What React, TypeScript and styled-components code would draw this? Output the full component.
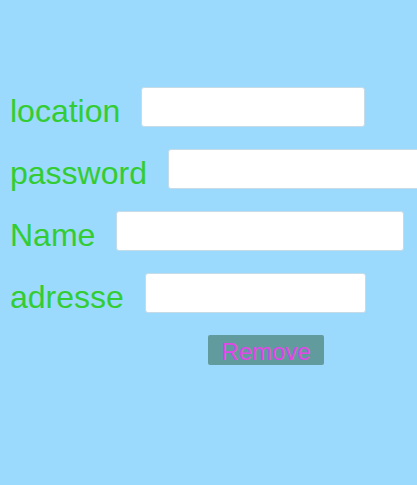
import React from 'react';
import styled, { createGlobalStyle } from 'styled-components';

const GlobalStyle = createGlobalStyle`
  html, body {
    margin: 0;
    padding: 0;
    overflow: hidden;
    background-color: #9bdafc;
  }
`;

type TField = {
  label: string;
  width: number;
  type?: string;
};

const fields: TField[] = [
  { label: 'location', width: 224 },
  { label: 'password', width: 270, type: 'password' },
  { label: 'Name', width: 288 },
  { label: 'adresse', width: 221 },
];

const App = () => {
  return (
    <>
      <GlobalStyle />
      <Page>
        <Form>
          {fields.map((f) => (
            <Row key={f.label}>
              <Label>{f.label}</Label>
              <Input type={f.type || 'text'} $width={f.width} />
            </Row>
          ))}
          <ButtonRow>
            <RemoveButton type="button">Remove</RemoveButton>
          </ButtonRow>
        </Form>
      </Page>
    </>
  );
};

export default App;

const Page = styled.div`
  width: 417px;
  height: 485px;
  overflow: hidden;
  background-color: #9bdafc;
  font-family: 'Liberation Sans', Arial, sans-serif;
`;

const Form = styled.form`
  display: flex;
  flex-direction: column;
  padding: 76px 0 0 10px;
`;

const Row = styled.div`
  display: flex;
  align-items: center;
  gap: 21px;
  height: 62px;
  white-space: nowrap;
`;

const Label = styled.label`
  flex-shrink: 0;
  font-size: 32px;
  line-height: 40px;
  padding-top: 7px;
  color: #33cc33;
`;

const Input = styled.input<{ $width: number }>`
  flex-shrink: 0;
  box-sizing: border-box;
  width: ${(p) => p.$width}px;
  height: 40px;
  margin: 0;
  padding: 0 6px;
  background: #ffffff;
  border: 1px solid #c5dbe8;
  border-radius: 3px;
  outline: none;
  font-family: 'Liberation Sans', Arial, sans-serif;
  font-size: 16px;
`;

const ButtonRow = styled.div`
  display: flex;
  padding: 11px 0 0 198px;
`;

const RemoveButton = styled.button`
  box-sizing: border-box;
  width: 116px;
  height: 30px;
  margin: 0;
  padding: 3px 0 0;
  background-color: #629b9e;
  border: none;
  border-radius: 2px;
  color: #e245ea;
  font-family: 'Liberation Sans', Arial, sans-serif;
  font-size: 24px;
  line-height: 1;
  cursor: pointer;
`;
